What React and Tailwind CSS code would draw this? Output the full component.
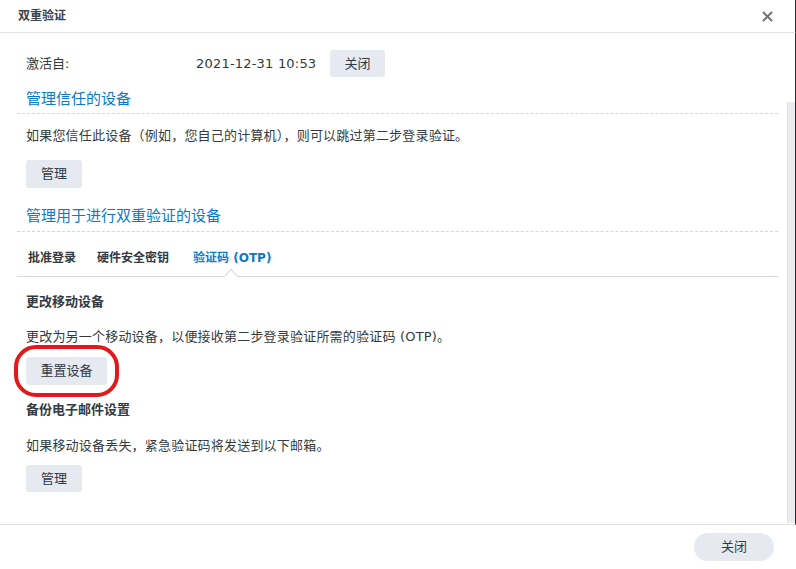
import React from 'react';

const font = { fontFamily: '"DejaVu Sans", "Noto Sans CJK SC", sans-serif' };

function Btn({ children, className = '' }) {
  return (
    <button className={`bg-[#e6e9ef] text-[#2f3a45] text-[13px] rounded-[3px] flex items-center justify-center ${className}`}>
      {children}
    </button>
  );
}

export default function App() {
  return (
    <div className="w-[796px] h-[569px] bg-white flex flex-col overflow-hidden text-[#333a42]" style={font}>
      {/* title bar */}
      <div className="h-[33px] flex items-center justify-between pl-[18px] pr-[22px] border-b border-[#e2e4e7] border-r border-r-[#2a2a2a] shrink-0">
        <span className="text-[12px] font-semibold text-[#3a4049]">双重验证</span>
        <svg width="11" height="11" viewBox="0 0 11 11" className="text-[#6f747a]">
          <path d="M1 1 L10 10 M10 1 L1 10" stroke="currentColor" strokeWidth="2" />
        </svg>
      </div>

      {/* body */}
      <div className="h-[492px] flex border-r border-[#2a2a2a] border-b border-b-[#dfe1e4] shrink-0">
        <div className="flex-1 pl-[17px] pr-[9px]">
          <div className="pt-[17px] pl-[9px] flex items-center h-[44px]">
            <span className="text-[13px] w-[170px]">激活自:</span>
            <span className="text-[13px] w-[134px] tracking-[0.2px]">2021-12-31 10:53</span>
            <Btn className="w-[55px] h-[27px]">关闭</Btn>
          </div>

          <div className="mt-[12px] pl-[9px] leading-[20px] text-[15px] text-[#0a7bc8] pb-[4px] border-b border-dashed border-[#d3d6da]">
            管理信任的设备
          </div>
          <div className="mt-[12px] pl-[9px] leading-[20px] text-[13px] tracking-[0.2px]">
            如果您信任此设备（例如，您自己的计算机），则可以跳过第二步登录验证。
          </div>
          <div className="pl-[9px] mt-[14px]">
            <Btn className="w-[56px] h-[28px]">管理</Btn>
          </div>

          <div className="mt-[18px] pl-[9px] leading-[20px] text-[15px] text-[#0a7bc8] pb-[5px] border-b border-dashed border-[#d3d6da]">
            管理用于进行双重验证的设备
          </div>

          <div className="relative flex pl-[11px] pt-[16px] pb-[8px] leading-[20px] text-[12px] font-bold border-b border-[#d6d9dd]">
            <span className="mr-[21px]">批准登录</span>
            <span className="mr-[24px]">硬件安全密钥</span>
            <span className="relative text-[#0a7bc8]">
              验证码 (OTP)
              <span className="absolute left-[33px] top-[23px] w-[10px] h-[10px] bg-white border-l border-t border-[#d6d9dd] rotate-45"></span>
            </span>
          </div>

          <div className="mt-[15px] pl-[9px] leading-[20px] text-[13px] font-bold">更改移动设备</div>
          <div className="mt-[15px] pl-[9px] leading-[20px] text-[13px] tracking-[0.2px]">
            更改为另一个移动设备，以便接收第二步登录验证所需的验证码 (OTP)。
          </div>
          <div className="pl-[9px] mt-[10px]">
            <div className="relative w-[81px]">
              <Btn className="w-[81px] h-[28px]">重置设备</Btn>
              <div className="absolute left-[-12px] top-[-12px] w-[105px] h-[52px] border-[4px] border-[#e0191b] rounded-[22px]"></div>
            </div>
          </div>

          <div className="mt-[15px] pl-[9px] leading-[20px] text-[13px] font-bold">备份电子邮件设置</div>
          <div className="mt-[16px] pl-[9px] leading-[20px] text-[13px] tracking-[0.2px]">
            如果移动设备丢失，紧急验证码将发送到以下邮箱。
          </div>
          <div className="pl-[9px] mt-[9px]">
            <Btn className="w-[56px] h-[27px]">管理</Btn>
          </div>
        </div>

        {/* scrollbar */}
        <div className="w-[8px] flex flex-col">
          <div className="mt-[69px] flex-1 mb-[1px] bg-[#ececee] border-l border-[#e2e3e6]"></div>
        </div>
      </div>

      {/* footer */}
      <div className="flex-1 flex items-center justify-end pr-[22px]">
        <button className="w-[80px] h-[28px] rounded-full bg-[#e6e9ef] text-[13px] text-[#2f3a45]">关闭</button>
      </div>
    </div>
  );
}
